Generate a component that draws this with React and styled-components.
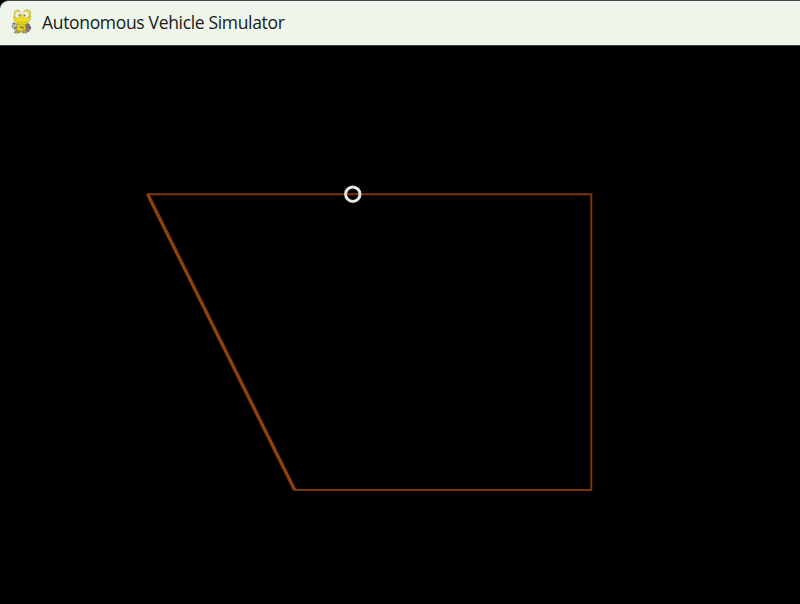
import React from "react";
import styled, { createGlobalStyle } from "styled-components";

const GlobalStyle = createGlobalStyle`
  * { box-sizing: border-box; }
  body { margin: 0; background: #000; overflow: hidden; }
`;

const Window = styled.main`
  width: 800px;
  height: 604px;
  display: flex;
  flex-direction: column;
  background: #000;
`;

const TitleBar = styled.header`
  flex: none;
  height: 46px;
  padding: 0 0 0 11px;
  display: flex;
  align-items: flex-start;
  gap: 8px;
  border-top: 1px solid #494449;
  border-bottom: 1px solid #343834;
  border-top-left-radius: 9px;
  background: #eef6eb;
  box-shadow: inset 0 -1px #f5faf3;
`;

const AppIcon = styled.svg`
  flex: none;
  display: block;
  width: 23px;
  height: 26px;
  margin-top: 8px;
`;

const Title = styled.h1`
  margin: 0;
  font: 400 17.5px/42px "Open Sans", "Noto Sans", sans-serif;
  letter-spacing: -0.33px;
  color: #181a18;
  white-space: nowrap;
`;

const Track = styled.svg`
  flex: none;
  display: block;
  width: 800px;
  height: 558px;
`;

function PygameIcon() {
  return (
    <AppIcon viewBox="0 0 23 26" aria-hidden="true">
      <path d="m2 14 4 1 3 2-1 5-4-1-3-3z" fill="#b9bcb9" stroke="#747874" strokeWidth=".7" />
      <path d="m14 14 4 1 2 4-3 4-4-3z" fill="#89786c" stroke="#6c625b" strokeWidth=".8" />
      <path d="M7 14h7l1 8-8 1-2-3z" fill="#dfcf24" stroke="#8d822e" strokeWidth=".5" />
      <path d="M4 22h5v2H3zm8-1h3l1 3h-5z" fill="#b9aa48" stroke="#827b4d" strokeWidth=".5" />
      <path d="M3 7C2 12 5 15 10 16c5 0 8-2 9-5l1-4-5-4-4 3-4-3z" fill="#ecdb22" stroke="#a39524" strokeWidth=".5" />
      <ellipse cx="6.3" cy="5" rx="3.3" ry="4" fill="#e3d53b" stroke="#a8a163" strokeWidth=".5" />
      <ellipse cx="16" cy="4.8" rx="3.7" ry="4" fill="#e3d53b" stroke="#a8a163" strokeWidth=".5" />
      <ellipse cx="7" cy="5.8" rx="2.6" ry="3" fill="#f0eee3" />
      <ellipse cx="14.8" cy="5.8" rx="2.7" ry="3" fill="#f0eee3" />
      <circle cx="8.5" cy="6.5" r=".9" fill="#6a663f" />
      <circle cx="13.5" cy="6.5" r=".9" fill="#6a663f" />
      <path d="M6 13q4 2.5 10 0" fill="none" stroke="#b6a91d" strokeWidth=".7" />
      <path d="m2 14 2 1M3 19l3-1M9 18l4 1M16 17l3 2" fill="none" stroke="#515851" strokeWidth="1" />
    </AppIcon>
  );
}

export default function App() {
  return (
    <Window>
      <GlobalStyle />
      <TitleBar>
        <PygameIcon />
        <Title>Autonomous Vehicle Simulator</Title>
      </TitleBar>
      <Track viewBox="0 46 800 558" role="img" aria-label="Vehicle track">
        <path d="M147 194.2H591.3V490H294.5" fill="none" stroke="#7e370c" strokeWidth="2" />
        <path d="M147.5 194 294.7 490" fill="none" stroke="#913f0d" strokeWidth="3.4" />
        <circle cx="352.8" cy="194.2" r="7.2" fill="none" stroke="#ededed" strokeWidth="2.9" />
        <path d="M344.5 194.2h2.5M358.5 194.2h2.5M352.8 186v1.5M352.8 201v1.5" stroke="#d7d0cb" strokeWidth="2" />
      </Track>
    </Window>
  );
}
